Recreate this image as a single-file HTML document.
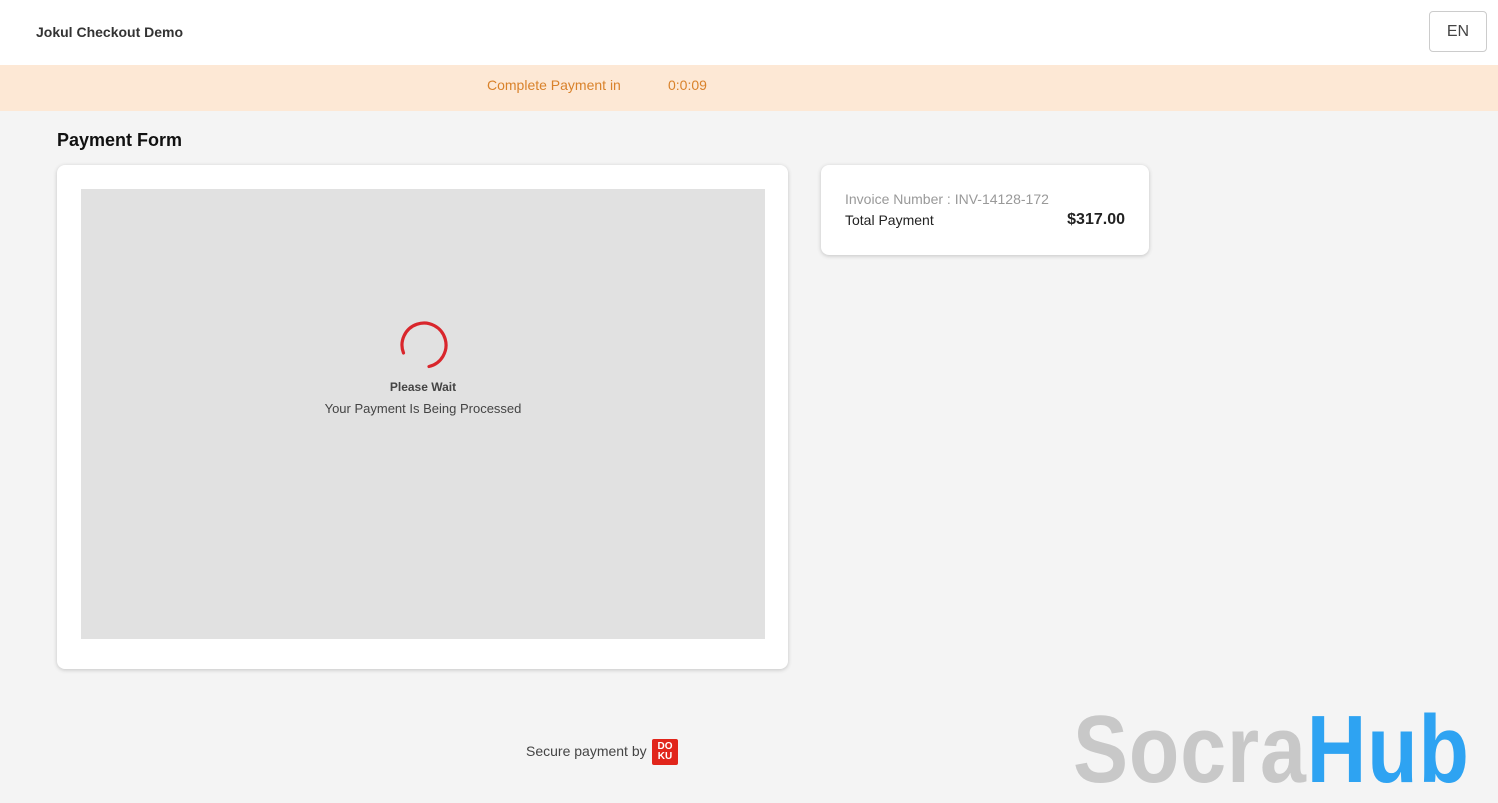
<!DOCTYPE html>
<html><head><style>
*{margin:0;padding:0;box-sizing:border-box}
body{width:1498px;height:790px;background:#f4f4f4;font-family:"Liberation Sans",sans-serif;position:relative;overflow:hidden}
.hdr{position:absolute;left:0;top:0;width:1498px;height:65px;background:#fff;box-shadow:0 1px 4px rgba(0,0,0,.15)}
.hdr .t{position:absolute;left:36px;top:24px;font-size:14px;font-weight:bold;color:#333}
.en{position:absolute;left:1429px;top:11px;width:58px;height:41px;border:1px solid #ccc;border-radius:4px;font-size:16px;color:#444;text-align:center;line-height:39px}
.bar{position:absolute;left:0;top:65px;width:1498px;height:46px;background:#fde8d5;color:#d9822b;font-size:14px}
.card{position:absolute;background:#fff;border-radius:8px;box-shadow:0 1px 4px rgba(0,0,0,.2)}
</style></head><body>
<div class="hdr"><div class="t">Jokul Checkout Demo</div><div class="en">EN</div></div>
<div class="bar"><span style="position:absolute;left:487px;top:12px">Complete Payment in</span><span style="position:absolute;left:668px;top:12px">0:0:09</span></div>
<div style="position:absolute;left:57px;top:130px;font-size:18px;font-weight:bold;color:#111">Payment Form</div>
<div class="card" style="left:57px;top:165px;width:731px;height:504px">
<div style="position:absolute;left:24px;top:24px;width:684px;height:450px;background:#e1e1e1">
<svg style="position:absolute;left:317px;top:132px" width="50" height="50" viewBox="0 0 50 50"><path d="M5.5 32 A22 22 0 1 1 31 45.5" fill="none" stroke="#d9262c" stroke-width="3.2" stroke-linecap="round"/></svg>
<div style="position:absolute;left:0;width:684px;top:191px;text-align:center;font-size:12px;font-weight:bold;color:#444">Please Wait</div>
<div style="position:absolute;left:0;width:684px;top:212px;text-align:center;font-size:13px;color:#444">Your Payment Is Being Processed</div>
</div></div>
<div class="card" style="left:821px;top:165px;width:328px;height:90px">
<div style="position:absolute;left:24px;top:26px;font-size:14px;color:#999">Invoice Number : INV-14128-172</div>
<div style="position:absolute;left:24px;top:47px;font-size:14px;color:#222">Total Payment</div>
<div style="position:absolute;right:24px;top:46px;font-size:16px;font-weight:bold;color:#222">$317.00</div>
</div>
<div style="position:absolute;left:526px;top:743px;font-size:14px;color:#444">Secure payment by</div>
<div style="position:absolute;left:652px;top:739px;width:26px;height:26px;background:#e1251b;border-radius:2px;color:#fff;font-size:10px;font-weight:bold;line-height:10px;text-align:center;padding-top:3px">DO<br>KU</div>
<div style="position:absolute;left:1073px;top:702px;font-size:96px;font-weight:bold;line-height:1;transform:scaleX(0.86);transform-origin:left top;white-space:nowrap;letter-spacing:1px"><span style="color:#c8c8c8">Socra</span><span style="color:#2ea3f2">Hub</span></div>
</body></html>
